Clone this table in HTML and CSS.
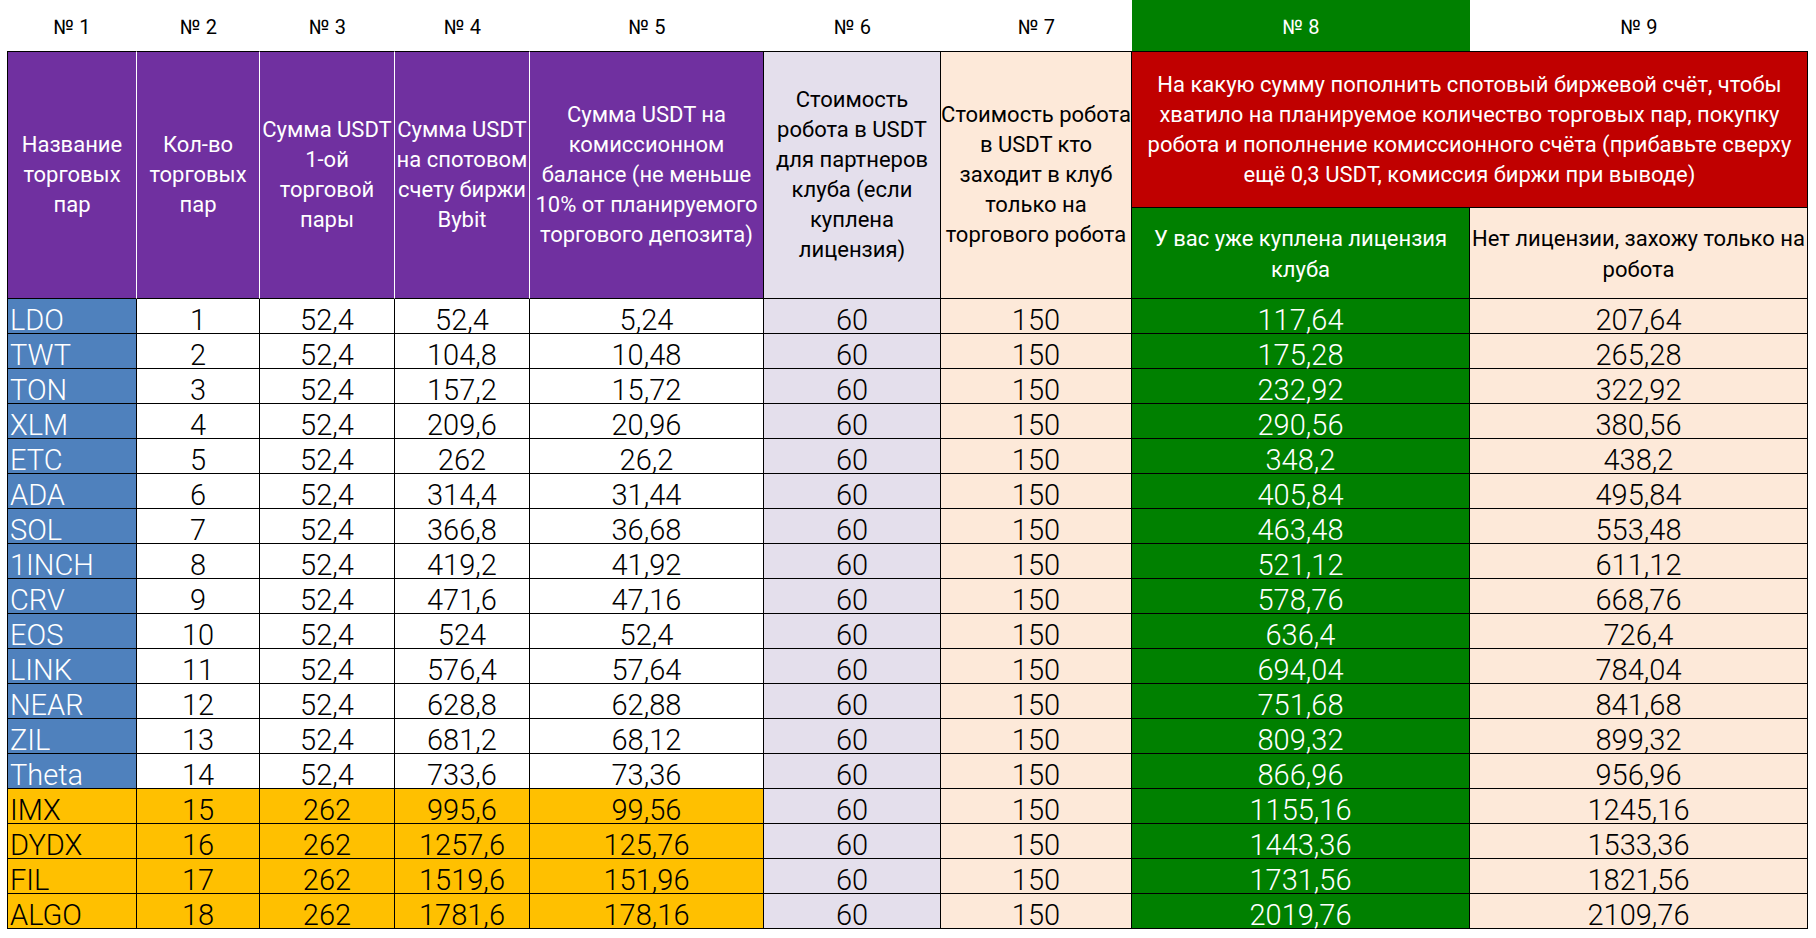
FILE: index.html
```html
<!DOCTYPE html>
<html lang="ru">
<head>
<meta charset="utf-8">
<title>Таблица торговых пар</title>
<link rel="stylesheet" href="styles.css">
</head>
<body>
<div class="sheet">
  <div class="num">№ 1</div>
  <div class="num">№ 2</div>
  <div class="num">№ 3</div>
  <div class="num">№ 4</div>
  <div class="num">№ 5</div>
  <div class="num">№ 6</div>
  <div class="num">№ 7</div>
  <div class="num num-green">№ 8</div>
  <div class="num">№ 9</div>

  <div class="h h-purple h-first">Название<br>торговых<br>пар</div>
  <div class="h h-purple">Кол-во<br>торговых<br>пар</div>
  <div class="h h-purple">Сумма USDT<br>1-ой<br>торговой<br>пары</div>
  <div class="h h-purple">Сумма USDT<br>на спотовом<br>счету биржи<br>Bybit</div>
  <div class="h h-purple h-last">Сумма USDT на<br>комиссионном<br>балансе (не меньше<br>10% от планируемого<br>торгового депозита)</div>
  <div class="h h-lav">Стоимость<br>робота в USDT<br>для партнеров<br>клуба (если<br>куплена<br>лицензия)</div>
  <div class="h h-pch">Стоимость робота<br>в USDT кто<br>заходит в клуб<br>только на<br>торгового робота</div>
  <div class="h h-red">На какую сумму пополнить спотовый биржевой счёт, чтобы<br>хватило на планируемое количество торговых пар, покупку<br>робота и пополнение комиссионного счёта (прибавьте сверху<br>ещё 0,3 USDT, комиссия биржи при выводе)</div>
  <div class="h h-sub h-grn">У вас уже куплена лицензия<br>клуба</div>
  <div class="h h-sub h-pch">Нет лицензии, захожу только на<br>робота</div>

  <div class="row blue"><div class="c n">LDO</div><div class="c">1</div><div class="c">52,4</div><div class="c">52,4</div><div class="c">5,24</div><div class="c lav">60</div><div class="c pch">150</div><div class="c grn">117,64</div><div class="c pch">207,64</div></div>
  <div class="row blue"><div class="c n">TWT</div><div class="c">2</div><div class="c">52,4</div><div class="c">104,8</div><div class="c">10,48</div><div class="c lav">60</div><div class="c pch">150</div><div class="c grn">175,28</div><div class="c pch">265,28</div></div>
  <div class="row blue"><div class="c n">TON</div><div class="c">3</div><div class="c">52,4</div><div class="c">157,2</div><div class="c">15,72</div><div class="c lav">60</div><div class="c pch">150</div><div class="c grn">232,92</div><div class="c pch">322,92</div></div>
  <div class="row blue"><div class="c n">XLM</div><div class="c">4</div><div class="c">52,4</div><div class="c">209,6</div><div class="c">20,96</div><div class="c lav">60</div><div class="c pch">150</div><div class="c grn">290,56</div><div class="c pch">380,56</div></div>
  <div class="row blue"><div class="c n">ETC</div><div class="c">5</div><div class="c">52,4</div><div class="c">262</div><div class="c">26,2</div><div class="c lav">60</div><div class="c pch">150</div><div class="c grn">348,2</div><div class="c pch">438,2</div></div>
  <div class="row blue"><div class="c n">ADA</div><div class="c">6</div><div class="c">52,4</div><div class="c">314,4</div><div class="c">31,44</div><div class="c lav">60</div><div class="c pch">150</div><div class="c grn">405,84</div><div class="c pch">495,84</div></div>
  <div class="row blue"><div class="c n">SOL</div><div class="c">7</div><div class="c">52,4</div><div class="c">366,8</div><div class="c">36,68</div><div class="c lav">60</div><div class="c pch">150</div><div class="c grn">463,48</div><div class="c pch">553,48</div></div>
  <div class="row blue"><div class="c n">1INCH</div><div class="c">8</div><div class="c">52,4</div><div class="c">419,2</div><div class="c">41,92</div><div class="c lav">60</div><div class="c pch">150</div><div class="c grn">521,12</div><div class="c pch">611,12</div></div>
  <div class="row blue"><div class="c n">CRV</div><div class="c">9</div><div class="c">52,4</div><div class="c">471,6</div><div class="c">47,16</div><div class="c lav">60</div><div class="c pch">150</div><div class="c grn">578,76</div><div class="c pch">668,76</div></div>
  <div class="row blue"><div class="c n">EOS</div><div class="c">10</div><div class="c">52,4</div><div class="c">524</div><div class="c">52,4</div><div class="c lav">60</div><div class="c pch">150</div><div class="c grn">636,4</div><div class="c pch">726,4</div></div>
  <div class="row blue"><div class="c n">LINK</div><div class="c">11</div><div class="c">52,4</div><div class="c">576,4</div><div class="c">57,64</div><div class="c lav">60</div><div class="c pch">150</div><div class="c grn">694,04</div><div class="c pch">784,04</div></div>
  <div class="row blue"><div class="c n">NEAR</div><div class="c">12</div><div class="c">52,4</div><div class="c">628,8</div><div class="c">62,88</div><div class="c lav">60</div><div class="c pch">150</div><div class="c grn">751,68</div><div class="c pch">841,68</div></div>
  <div class="row blue"><div class="c n">ZIL</div><div class="c">13</div><div class="c">52,4</div><div class="c">681,2</div><div class="c">68,12</div><div class="c lav">60</div><div class="c pch">150</div><div class="c grn">809,32</div><div class="c pch">899,32</div></div>
  <div class="row blue"><div class="c n">Theta</div><div class="c">14</div><div class="c">52,4</div><div class="c">733,6</div><div class="c">73,36</div><div class="c lav">60</div><div class="c pch">150</div><div class="c grn">866,96</div><div class="c pch">956,96</div></div>
  <div class="row gold"><div class="c n">IMX</div><div class="c">15</div><div class="c">262</div><div class="c">995,6</div><div class="c">99,56</div><div class="c lav">60</div><div class="c pch">150</div><div class="c grn">1155,16</div><div class="c pch">1245,16</div></div>
  <div class="row gold"><div class="c n">DYDX</div><div class="c">16</div><div class="c">262</div><div class="c">1257,6</div><div class="c">125,76</div><div class="c lav">60</div><div class="c pch">150</div><div class="c grn">1443,36</div><div class="c pch">1533,36</div></div>
  <div class="row gold"><div class="c n">FIL</div><div class="c">17</div><div class="c">262</div><div class="c">1519,6</div><div class="c">151,96</div><div class="c lav">60</div><div class="c pch">150</div><div class="c grn">1731,56</div><div class="c pch">1821,56</div></div>
  <div class="row gold"><div class="c n">ALGO</div><div class="c">18</div><div class="c">262</div><div class="c">1781,6</div><div class="c">178,16</div><div class="c lav">60</div><div class="c pch">150</div><div class="c grn">2019,76</div><div class="c pch">2109,76</div></div>
</div>
</body>
</html>
```

FILE: styles.css
```css
* { box-sizing: border-box; }

html, body {
  margin: 0;
  padding: 0;
  background: #ffffff;
}

body {
  font-family: Roboto, "Noto Sans", "Liberation Sans", sans-serif;
  color: #000;
}

.sheet {
  display: grid;
  grid-template-columns: 130px 123px 135px 135px 234px 177px 191px 338px 338px;
  grid-template-rows: 51px 156px 92px repeat(18, 35px);
  margin-left: 7px;
  width: 1801px;
}

/* top numbering row */
.num {
  grid-row: 1;
  display: flex;
  align-items: center;
  justify-content: center;
  padding-top: 2px;
  font-size: 20px;
  color: #000;
}

.num-green {
  background: #008000;
  color: #fff;
}

/* header cells */
.h {
  display: flex;
  align-items: center;
  justify-content: center;
  text-align: center;
  font-size: 22px;
  line-height: 30px;
  white-space: nowrap;
  border-top: 1px solid #000;
  border-right: 1px solid #000;
  border-bottom: 1px solid #000;
  grid-row: 2 / span 2;
}

.h-purple {
  background: #7030a0;
  color: #fff;
  border-right-color: #fff;
}

.h-first { border-left: 1px solid #000; }
.h-last { border-right-color: #000; }

.h-lav { background: #e4dfec; }
.h-pch { background: #fde9d9; }

.h-red {
  grid-column: 8 / span 2;
  grid-row: 2;
  background: #c00000;
  color: #fff;
  border-bottom: none;
}

.h-sub {
  grid-row: 3;
  line-height: 31px;
  padding-top: 2px;
}

.h-grn {
  background: #008000;
  color: #fff;
}

/* data rows */
.row { display: contents; }

.c {
  display: flex;
  align-items: flex-end;
  justify-content: center;
  font-size: 29px;
  font-weight: 300;
  line-height: 26px;
  white-space: nowrap;
  border-right: 1px solid #000;
  border-bottom: 1px solid #000;
  background: #fff;
  color: #000;
}

.c.n {
  justify-content: flex-start;
  padding-left: 2px;
  border-left: 1px solid #000;
}

.blue .n {
  background: #4f81bd;
  color: #fff;
}

.gold .c { background: #ffc000; }

.c.lav { background: #e4dfec; }
.c.pch { background: #fde9d9; }
.c.grn { background: #008000; color: #fff; }
```
